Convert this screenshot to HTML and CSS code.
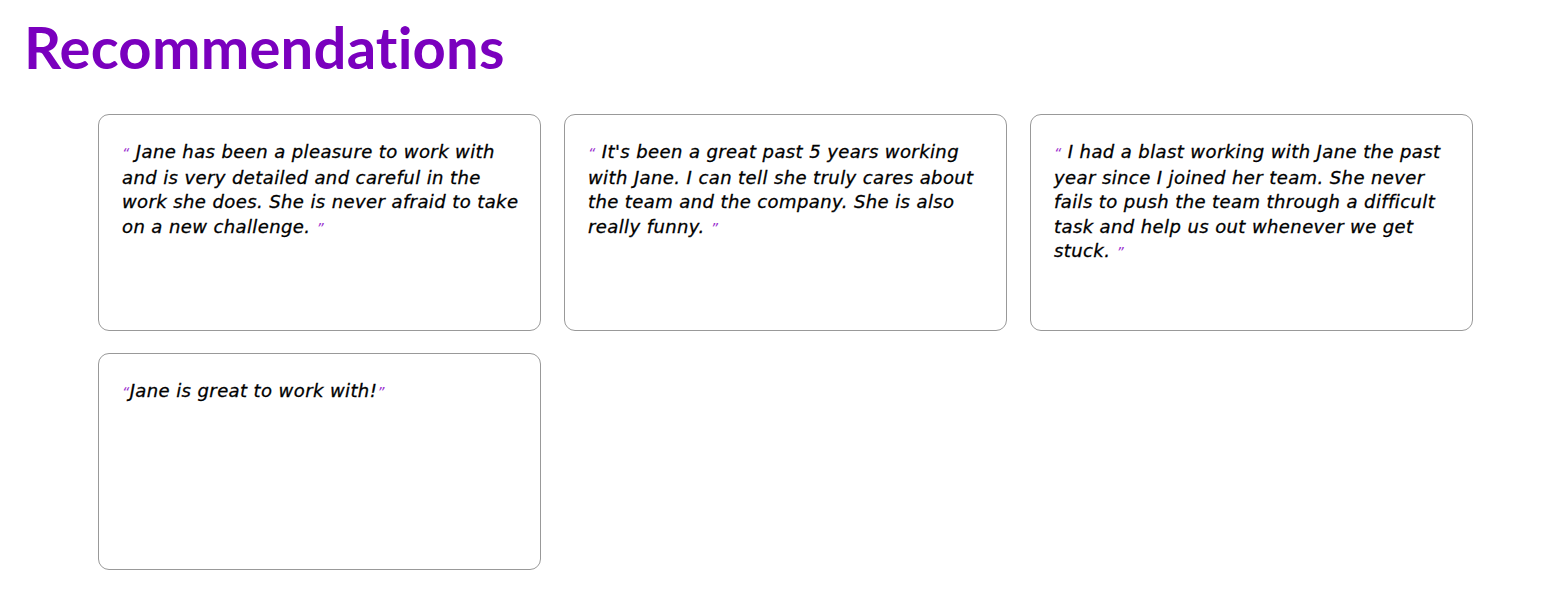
FILE: index.html
```html
<!DOCTYPE html>
<html>
<head>
<meta charset="utf-8">
<link rel="stylesheet" href="styles.css">
</head>
<body>
<h1 class="title">Recommendations</h1>
<div class="grid">
  <div class="card"><p class="quote"><span class="mark">“</span> Jane has been a pleasure to work with and is very detailed and careful in the work she does. She is never afraid to take on a new challenge. <span class="mark">”</span></p></div>
  <div class="card"><p class="quote"><span class="mark">“</span> It's been a great past 5 years working with Jane. I can tell she truly cares about the team and the company. She is also really funny. <span class="mark">”</span></p></div>
  <div class="card"><p class="quote"><span class="mark">“</span> I had a blast working with Jane the past year since I joined her team. She never fails to push the team through a difficult task and help us out whenever we get stuck. <span class="mark">”</span></p></div>
  <div class="card"><p class="quote"><span class="mark">“</span>Jane is great to work with!<span class="mark">”</span></p></div>
</div>
</body>
</html>
```
FILE: styles.css
```css
body {
  margin: 0;
  background: #fff;
  font-family: "Lato", "DejaVu Sans", sans-serif;
}
.title {
  margin: 13px 0 0 24px;
  font-size: 58px;
  line-height: 68px;
  font-weight: 700;
  color: #7a00be;
  letter-spacing: 0.2px;
}
.grid {
  display: grid;
  grid-template-columns: repeat(3, 443px);
  column-gap: 23px;
  row-gap: 22px;
  margin: 33px 0 0 98px;
}
.card {
  height: 217px;
  box-sizing: border-box;
  border: 1px solid #999;
  border-radius: 11px;
  padding: 25px 16px 0 23px;
}
.quote {
  margin: 0;
  font-family: "DejaVu Sans", sans-serif;
  font-style: italic;
  font-size: 18px;
  line-height: 24.5px;
  letter-spacing: 0.4px;
  color: #000;
  -webkit-text-stroke-width: 0.3px;
}
.mark {
  color: #9a30d0;
  font-size: 14px;
  -webkit-text-stroke-width: 0;
}
```
